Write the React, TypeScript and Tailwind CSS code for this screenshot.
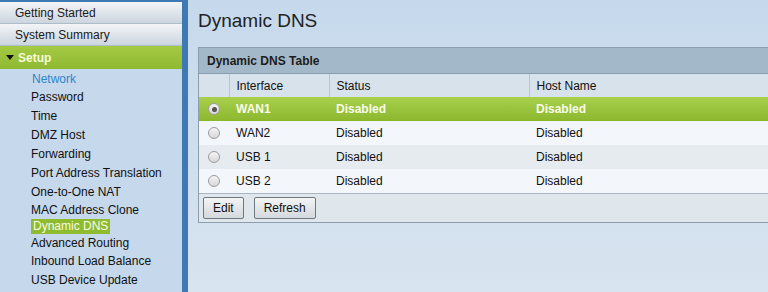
import React from 'react';

const font = { fontFamily: '"Liberation Sans", Arial, sans-serif' };

const subItems = [
    { label: 'Network', h: 'h-[19px]', kind: 'link' },
    { label: 'Password', h: 'h-[18px]' },
    { label: 'Time', h: 'h-[19px]' },
    { label: 'DMZ Host', h: 'h-[19px]' },
    { label: 'Forwarding', h: 'h-[19px]' },
    { label: 'Port Address Translation', h: 'h-[19px]' },
    { label: 'One-to-One NAT', h: 'h-[19px]' },
    { label: 'MAC Address Clone', h: 'h-[17px]' },
    { label: 'Dynamic DNS', h: 'h-[16px]', kind: 'active' },
    { label: 'Advanced Routing', h: 'h-[17px]' },
    { label: 'Inbound Load Balance', h: 'h-[19px]' },
    { label: 'USB Device Update', h: 'h-[19px]' },
];

const rows = [
    { name: 'WAN1', status: 'Disabled', host: 'Disabled', selected: true },
    { name: 'WAN2', status: 'Disabled', host: 'Disabled' },
    { name: 'USB 1', status: 'Disabled', host: 'Disabled' },
    { name: 'USB 2', status: 'Disabled', host: 'Disabled' },
];

function Radio({ checked }: { checked?: boolean }) {
    return (
        <span className="flex w-[12px] h-[12px] rounded-full border border-[#9c9c9c] bg-gradient-to-b from-[#f4f4f4] to-[#d8d8d8] items-center justify-center">
            {checked && <span className="w-[5px] h-[5px] rounded-full bg-[#555]" />}
        </span>
    );
}

function TopItem({ label }: { label: string }) {
    return (
        <div className="h-[22px] flex items-center pl-[15px] text-[12px] text-[#1a1a1a] bg-gradient-to-b from-[#f3f5f7] to-[#ccd5de] border-b border-[#aebdca]">
            {label}
        </div>
    );
}

export default function App() {
    return (
        <div className="w-[768px] h-[292px] overflow-hidden flex" style={font}>
            {/* Sidebar */}
            <div className="w-[182px] shrink-0 bg-[#c5d8ec] border-t-2 border-[#3f79b4] flex flex-col">
                <TopItem label="Getting Started" />
                <TopItem label="System Summary" />
                <div className="h-[23px] flex items-center pl-[6px] gap-[4px] text-[12px] font-bold text-[#f6fbd8] bg-gradient-to-b from-[#a5ca44] to-[#8fb932]">
                    <span className="w-0 h-0 border-l-[4px] border-r-[4px] border-t-[5px] border-l-transparent border-r-transparent border-t-[#111]" />
                    Setup
                </div>
                <div className="flex flex-col">
                    {subItems.map((it) => (
                        <div key={it.label} className={`${it.h} flex items-center pl-[31px] text-[12px]`}>
                            {it.kind === 'active' ? (
                                <span className="bg-[#8fbc2f] text-[#f7fbe6] px-[2px] leading-[15px]">{it.label}</span>
                            ) : it.kind === 'link' ? (
                                <span className="text-[#2f86c9] pl-[1px]">{it.label}</span>
                            ) : (
                                <span className="text-[#111]">{it.label}</span>
                            )}
                        </div>
                    ))}
                </div>
            </div>
            <div className="w-[6px] shrink-0 bg-[#3f79b4]" />

            {/* Content */}
            <div className="flex-1 overflow-hidden bg-gradient-to-b from-[#c6d9ec] to-[#d8e4ef] pl-[10px] pt-[9px]">
                <h1 className="text-[19px] text-[#222] leading-[24px] font-normal">Dynamic DNS</h1>
                <div className="mt-[14px] w-[600px] border border-[#8c9eae] bg-[#dfe6ec]">
                    <div className="h-[26px] flex items-center pl-[8px] text-[12px] font-bold text-[#1c1c1c] bg-[#a3b8c9] border-b border-[#8a9dad]">
                        Dynamic DNS Table
                    </div>
                    <table className="w-full border-collapse text-[12px] text-[#111]">
                        <thead>
                            <tr className="h-[23px] bg-[#d8e2ea]">
                                <th className="w-[30px] border-r border-[#b9c6d1]" />
                                <th className="w-[100px] text-left font-normal pl-[7px] border-r border-[#b9c6d1]">Interface</th>
                                <th className="w-[200px] text-left font-normal pl-[7px] border-r border-[#b9c6d1]">Status</th>
                                <th className="text-left font-normal pl-[7px]">Host Name</th>
                            </tr>
                        </thead>
                        <tbody>
                            {rows.map((r, i) => (
                                <tr
                                    key={r.name}
                                    className={`h-[24px] ${r.selected ? 'bg-gradient-to-b from-[#a9d04c] to-[#8cb72d] text-[#f8fce8] font-bold' : i % 2 === 1 ? 'bg-[#f3f6fa]' : 'bg-[#e6ebf0]'}`}
                                >
                                    <td className="align-middle">
                                        <div className="flex justify-center items-center"><Radio checked={r.selected} /></div>
                                    </td>
                                    <td className="pl-[7px]">{r.name}</td>
                                    <td className="pl-[7px]">{r.status}</td>
                                    <td className="pl-[7px]">{r.host}</td>
                                </tr>
                            ))}
                        </tbody>
                    </table>
                    <div className="h-[29px] flex items-center gap-[10px] pl-[4px] border-t border-[#a9b7c3]">
                        <button className="h-[22px] px-[9px] text-[12px] text-[#111] rounded-[2px] border border-[#6f7880] bg-gradient-to-b from-[#f3f4f5] to-[#d4d9dd]">Edit</button>
                        <button className="h-[22px] px-[9px] text-[12px] text-[#111] rounded-[2px] border border-[#6f7880] bg-gradient-to-b from-[#f3f4f5] to-[#d4d9dd]">Refresh</button>
                    </div>
                </div>
            </div>
        </div>
    );
}
